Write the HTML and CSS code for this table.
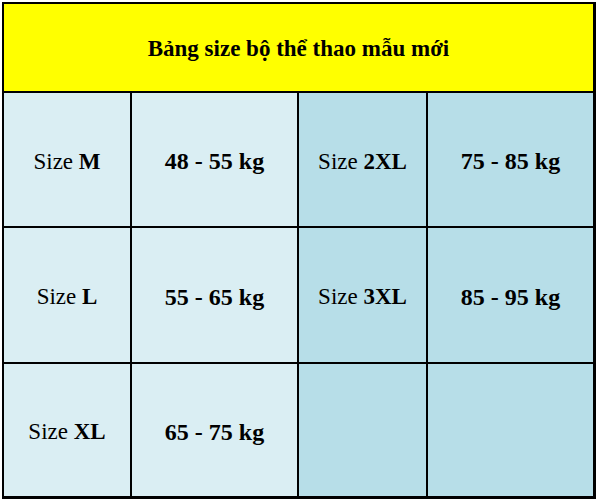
FILE: index.html
```html
<!DOCTYPE html>
<html lang="vi">
<head>
<meta charset="utf-8">
<title>Bảng size bộ thể thao mẫu mới</title>
<link rel="stylesheet" href="styles.css">
</head>
<body>
<div class="sheet">
  <div class="cell title">Bảng size bộ thể thao mẫu mới</div>

  <div class="cell light">Size <b>M</b></div>
  <div class="cell light kg">48 - 55 kg</div>
  <div class="cell dark">Size <b>2XL</b></div>
  <div class="cell dark kg">75 - 85 kg</div>

  <div class="cell light">Size <b>L</b></div>
  <div class="cell light kg">55 - 65 kg</div>
  <div class="cell dark">Size <b>3XL</b></div>
  <div class="cell dark kg">85 - 95 kg</div>

  <div class="cell light">Size <b>XL</b></div>
  <div class="cell light kg">65 - 75 kg</div>
  <div class="cell dark"></div>
  <div class="cell dark"></div>
</div>
</body>
</html>
```

FILE: styles.css
```css
html, body {
  margin: 0;
  padding: 0;
  background: #ffffff;
}

body {
  font-family: "Liberation Serif", "Times New Roman", serif;
  color: #000;
}

.sheet {
  box-sizing: border-box;
  margin: 2px 0 0 2px;
  width: 594px;
  height: 497px;
  border-style: solid;
  border-color: #000;
  border-width: 2px 3px 3px 2px;
  background: #000;
  display: grid;
  grid-template-columns: 126px 165px 127px 1fr;
  grid-template-rows: 87px 133px 134px 1fr;
  gap: 2px;
}

.cell {
  display: flex;
  align-items: center;
  justify-content: center;
  font-size: 23px;
  white-space: pre;
  padding-top: 4px;
  box-sizing: border-box;
}

.cell b {
  font-weight: bold;
}

.title {
  grid-column: 1 / -1;
  background: #ffff00;
  font-weight: bold;
  font-size: 23px;
  padding-top: 3px;
}

.light {
  background: #daeef3;
}

.dark {
  background: #b7dee8;
}

.kg {
  font-weight: bold;
  font-size: 24px;
}
```
